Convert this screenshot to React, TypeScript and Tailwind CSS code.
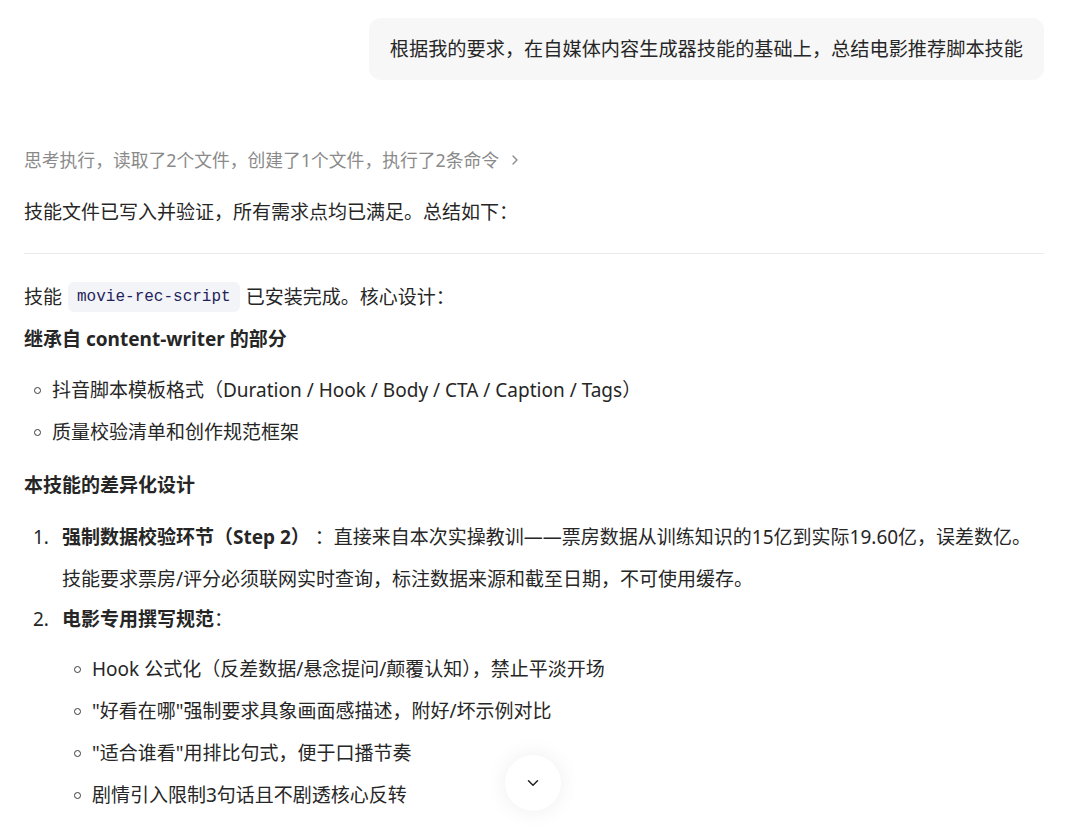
import { ChevronRight, ChevronDown } from 'lucide-react';

const font = { fontFamily: '"Noto Sans", "Noto Sans CJK SC", sans-serif' };

function Bullet({ children, indent = false }: { children: React.ReactNode; indent?: boolean }) {
  return (
    <div className={`flex items-center h-[42px] ${indent ? 'pl-[50px]' : 'pl-[10px]'}`}>
      <span className="w-[7px] h-[7px] rounded-full border border-[#3a3a3a] mr-[11px] shrink-0" />
      <span>{children}</span>
    </div>
  );
}

export default function App() {
  return (
    <div
      className="relative h-[828px] w-[1080px] overflow-hidden bg-white text-[19px] text-[#262626]"
      style={font}
    >
      <div className="pl-[24px] pr-[36px] pt-[18px]">
        <div className="flex justify-end">
          <div className="rounded-[12px] bg-[#f7f7f7] px-[21px] py-[16px] text-[19.2px] leading-[30px]">
            根据我的要求，在自媒体内容生成器技能的基础上，总结电影推荐脚本技能
          </div>
        </div>

        <div className="mt-[59px] flex h-[42px] items-center text-[17.8px] text-[#8a8a8a]">
          <span>思考执行，读取了2个文件，创建了1个文件，执行了2条命令</span>
          <ChevronRight className="ml-[8px] h-[16px] w-[16px]" strokeWidth={2} />
        </div>

        <div className="mt-[10px] h-[42px] leading-[42px]">技能文件已写入并验证，所有需求点均已满足。总结如下：</div>

        <hr className="mt-[20px] border-t border-[#ececec]" />

        <div className="mt-[22px] flex h-[42px] items-center">
          <span>技能</span>
          <code
            className="mx-[6px] rounded-[6px] bg-[#f3f4f8] px-[9px] py-[3px] text-[16px] text-[#1f1f5c]"
            style={{ fontFamily: '"Liberation Mono", monospace' }}
          >
            movie-rec-script
          </code>
          <span>已安装完成。核心设计：</span>
        </div>

        <div className="h-[42px] leading-[42px] font-bold">继承自 content-writer 的部分</div>

        <div className="mt-[9px]">
          <Bullet>抖音脚本模板格式（Duration / Hook / Body / CTA / Caption / Tags）</Bullet>
          <Bullet>质量校验清单和创作规范框架</Bullet>
        </div>

        <div className="mt-[11px] h-[42px] leading-[42px] font-bold">本技能的差异化设计</div>

        <div className="mt-[10px]">
          <div className="flex leading-[42px]">
            <span className="w-[38px] shrink-0 pl-[9px]">1.</span>
            <div>
              <div>
                <span className="font-bold">强制数据校验环节（Step 2）</span> ：直接来自本次实操教训——票房数据从训练知识的15亿到实际19.60亿，误差数亿。
              </div>
              <div>技能要求票房/评分必须联网实时查询，标注数据来源和截至日期，不可使用缓存。</div>
            </div>
          </div>
          <div className="-mt-[2px] flex leading-[42px]">
            <span className="w-[38px] shrink-0 pl-[9px]">2.</span>
            <div>
              <span className="font-bold">电影专用撰写规范</span>：
            </div>
          </div>
          <div className="mt-[8px]">
            <Bullet indent>Hook 公式化（反差数据/悬念提问/颠覆认知），禁止平淡开场</Bullet>
            <Bullet indent>"好看在哪"强制要求具象画面感描述，附好/坏示例对比</Bullet>
            <Bullet indent>"适合谁看"用排比句式，便于口播节奏</Bullet>
            <Bullet indent>剧情引入限制3句话且不剧透核心反转</Bullet>
          </div>
        </div>
      </div>

      <button className="absolute left-[505px] top-[755px] flex h-[56px] w-[56px] items-center justify-center rounded-full bg-white shadow-[0_0_22px_rgba(0,0,0,0.07)]">
        <ChevronDown className="h-[18px] w-[18px] text-[#222]" strokeWidth={2} />
      </button>
    </div>
  );
}
